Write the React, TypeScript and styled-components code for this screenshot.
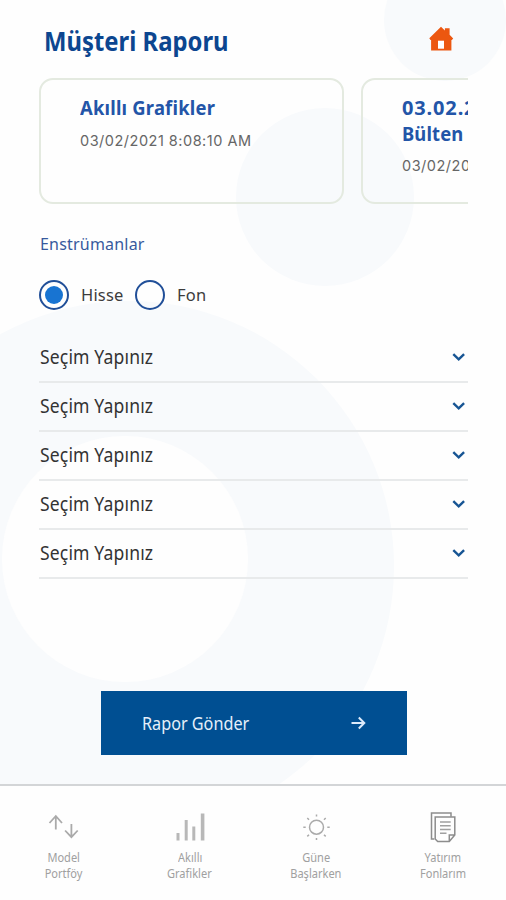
import React, { useState } from "react";
import styled, { createGlobalStyle } from "styled-components";

const GlobalStyle = createGlobalStyle`
  * { box-sizing: border-box; }
  body { margin: 0; background: #fefefe; }
  button { border: 0; background: none; padding: 0; font: inherit; color: inherit; text-align: left; }
`;

const Screen = styled.div`
  position: relative;
  display: flex;
  flex-direction: column;
  width: 506px;
  height: 900px;
  overflow: hidden;
  background: #fefefe;
  color: #333;
  font-family: "Noto Sans", "Open Sans", sans-serif;
`;

const Bubble = styled.div<{ $x: number; $y: number; $r: number; $color?: string }>`
  position: absolute;
  left: ${(p) => p.$x - p.$r}px;
  top: ${(p) => p.$y - p.$r}px;
  width: ${(p) => p.$r * 2}px;
  height: ${(p) => p.$r * 2}px;
  border-radius: 50%;
  background: ${(p) => p.$color ?? "#f8fafc"};
`;

const Condensed = styled.span<{ $x: number; $origin?: string; $spacing?: number }>`
  display: block;
  width: max-content;
  white-space: nowrap;
  letter-spacing: ${(p) => p.$spacing ?? 0}px;
  transform: scaleX(${(p) => p.$x});
  transform-origin: ${(p) => p.$origin ?? "left"} center;
`;

const Content = styled.main`
  position: relative;
  display: flex;
  flex-direction: column;
  height: 784px;
  padding: 0 38px 0 39px;
`;

const Header = styled.header`
  display: flex;
  justify-content: space-between;
  align-items: flex-start;
  height: 78px;
  padding: 22px 14px 0 5px;
`;

const Title = styled.h1`
  margin: 0;
  font-size: 27px;
  line-height: 38px;
  font-weight: 700;
  color: #0c4690;
`;

const HomeButton = styled.button`
  display: flex;
  margin-top: 4px;
`;

const Carousel = styled.section`
  display: flex;
  gap: 17px;
  overflow: hidden;
  height: 126px;
`;

const Card = styled.article`
  flex: 0 0 305px;
  height: 126px;
  padding: 15px 39px 0;
  border: 2px solid #e4eae0;
  border-radius: 14px;
`;

const CardTitle = styled.h2`
  margin: 0 0 12px;
  font-size: 20px;
  line-height: 25.5px;
  font-weight: 700;
  color: #2355a8;
`;

const CardDate = styled.time`
  display: block;
  font-family: Inter, sans-serif;
  font-size: 14.5px;
  line-height: 16px;
  color: #666;
  letter-spacing: 0.5px;
  white-space: nowrap;
`;

const SectionLabel = styled.h3`
  margin: 29px 0 0;
  padding-left: 1px;
  font-size: 16.5px;
  line-height: 22px;
  font-weight: 400;
  color: #37599d;
`;

const RadioGroup = styled.div`
  display: flex;
  height: 30px;
  margin-top: 25px;
`;

const RadioOption = styled.button<{ $width: number }>`
  display: flex;
  align-items: center;
  gap: 12px;
  width: ${(p) => p.$width}px;
  font-size: 17px;
  line-height: 30px;
  color: #3c3c3c;
`;

const RadioRing = styled.span`
  display: grid;
  place-items: center;
  flex: none;
  width: 30px;
  height: 30px;
  border: 2px solid #214f98;
  border-radius: 50%;
`;

const RadioDot = styled.span`
  width: 18px;
  height: 18px;
  border-radius: 50%;
  background: #1874d2;
`;

const SelectList = styled.div`
  display: flex;
  flex-direction: column;
  margin-top: 24px;
`;

const SelectRow = styled.button`
  display: flex;
  align-items: center;
  justify-content: space-between;
  height: 49px;
  padding: 0 3px 2px 1px;
  border-bottom: 2px solid #e8eaeb;
  font-size: 19px;
  line-height: 26px;
  color: #333;
`;

const SendButton = styled.button`
  display: flex;
  align-items: center;
  justify-content: space-between;
  width: 306px;
  height: 64px;
  margin: 112px 0 0 62px;
  padding: 0 41px 0 41px;
  background: #004f92;
  color: #e6effa;
  font-size: 18px;
`;

const TabBar = styled.nav`
  position: relative;
  display: grid;
  grid-template-columns: repeat(4, 126.5px);
  height: 116px;
  padding-top: 25px;
  border-top: 2px solid #d3d5d7;
  background: #fefefe;
`;

const Tab = styled.button`
  display: flex;
  flex-direction: column;
  align-items: center;
  color: #a0a0a0;
  font-size: 12px;
  line-height: 16px;
  text-align: center;
`;

const TabIcon = styled.svg`
  display: block;
  width: 34px;
  height: 34px;
  margin-bottom: 5px;
  fill: none;
  stroke: #aaa;
`;

const HomeIcon = () => (
  <svg width="25" height="26" viewBox="0 0 25 26" fill="#ec5710">
    <path d="M0.3 12.3 12 0.8l3.9 3.7V2.2h4.7v6.6l3.6 3.6-1.3 1.6h-.5V24.6H2.1V14h-.6z" />
    <path d="M9 14.7h6v8H9z" fill="#fff" />
  </svg>
);

const Chevron = () => (
  <svg width="13" height="11" viewBox="0 0 13 11" fill="none" stroke="#175594" strokeWidth="2.4">
    <path d="M1.3 3.1 6.7 8.3l5.4-5.2" />
  </svg>
);

const ArrowRight = () => (
  <svg width="15" height="14" viewBox="0 0 15 14" fill="none" stroke="#dceafa" strokeWidth="2">
    <path d="M.5 7h13M7.8 1.5 13.3 7l-5.5 5.5" />
  </svg>
);

const tabs = [
  {
    lines: ["Model", "Portföy"],
    scale: 0.92,
    icon: (
      <g strokeWidth="1.8">
        <path d="M9.8 18.5V5M3.5 12 9.8 5 16 12M25.4 13v13M19.1 19.5l6.3 6.7 6.3-6.7" />
      </g>
    ),
  },
  {
    lines: ["Akıllı", "Grafikler"],
    scale: 0.92,
    icon: (
      <g stroke="#b8b8b8">
        <path strokeWidth="3" d="M5 22v7.5M13.2 9v20.5M20.8 15.5v14" />
        <path strokeWidth="3.6" d="M29.6 2.5v27" />
      </g>
    ),
  },
  {
    lines: ["Güne", "Başlarken"],
    scale: 0.92,
    icon: (
      <g strokeWidth="1.5">
        <circle cx="17.5" cy="16.2" r="7" />
        <path d="M17.5 3.4v2M17.5 27v2M4.3 16.2h2.4M28.3 16.2h2.4M8.3 7l1.7 1.7M25 23.7l1.7 1.7M8.3 25.4l1.7-1.7M25 8.7 26.7 7" />
      </g>
    ),
  },
  {
    lines: ["Yatırım", "Fonlarım"],
    scale: 0.92,
    icon: (
      <g strokeWidth="1.5" stroke="#8d8d8d">
        <path d="M8.3 28H5.5V2H25v3.8" />
        <path d="M9.2 6h19.6v18l-5.5 6.6H11.7L9.2 28zM28.8 24h-5.5v6.6" />
        <path d="M14 11h10.7M14 14.8h10.7M14 18.5h10.7M14 22.2h6.5" stroke="#a0a0a0" />
      </g>
    ),
  },
];

const instruments = [
  { name: "Hisse", width: 96 },
  { name: "Fon", width: 90 },
];

export default function App() {
  const [selected, setSelected] = useState("Hisse");
  return (
    <Screen>
      <GlobalStyle />
      <Bubble $x={445} $y={20} $r={61} />
      <Bubble $x={325} $y={196.5} $r={89} />
      <Bubble $x={129} $y={566} $r={265} />
      <Bubble $x={125} $y={559} $r={123} $color="#fefefe" />
      <Content>
        <Header>
          <Title><Condensed $x={0.883}>Müşteri Raporu</Condensed></Title>
          <HomeButton aria-label="Home"><HomeIcon /></HomeButton>
        </Header>
        <Carousel>
          <Card>
            <CardTitle><Condensed $x={0.92} $spacing={0.22}>Akıllı Grafikler</Condensed></CardTitle>
            <CardDate>03/02/2021 8:08:10 AM</CardDate>
          </Card>
          <Card>
            <CardTitle>
              <Condensed $x={1} $spacing={0.85}>03.02.2021</Condensed>
              <Condensed $x={0.92} $spacing={0.15}>Bülten</Condensed>
            </CardTitle>
            <CardDate>03/02/2021 8:08:10 AM</CardDate>
          </Card>
        </Carousel>
        <SectionLabel><Condensed $x={0.97} $spacing={0.2}>Enstrümanlar</Condensed></SectionLabel>
        <RadioGroup role="radiogroup">
          {instruments.map(({ name, width }) => (
            <RadioOption
              key={name}
              $width={width}
              role="radio"
              aria-checked={selected === name}
              onClick={() => setSelected(name)}
            >
              <RadioRing>{selected === name && <RadioDot />}</RadioRing>
              <Condensed $x={0.97} $spacing={0.2}>{name}</Condensed>
            </RadioOption>
          ))}
        </RadioGroup>
        <SelectList>
          {[0, 1, 2, 3, 4].map((row) => (
            <SelectRow key={row}>
              <Condensed $x={0.925} $spacing={0.15}>Seçim Yapınız</Condensed>
              <Chevron />
            </SelectRow>
          ))}
        </SelectList>
        <SendButton>
          <Condensed $x={0.9}>Rapor Gönder</Condensed>
          <ArrowRight />
        </SendButton>
      </Content>
      <TabBar>
        {tabs.map((tab) => (
          <Tab key={tab.lines[0]}>
            <TabIcon viewBox="0 0 34 34">{tab.icon}</TabIcon>
            {tab.lines.map((line) => (
              <Condensed key={line} $x={tab.scale} $origin="center">{line}</Condensed>
            ))}
          </Tab>
        ))}
      </TabBar>
    </Screen>
  );
}
